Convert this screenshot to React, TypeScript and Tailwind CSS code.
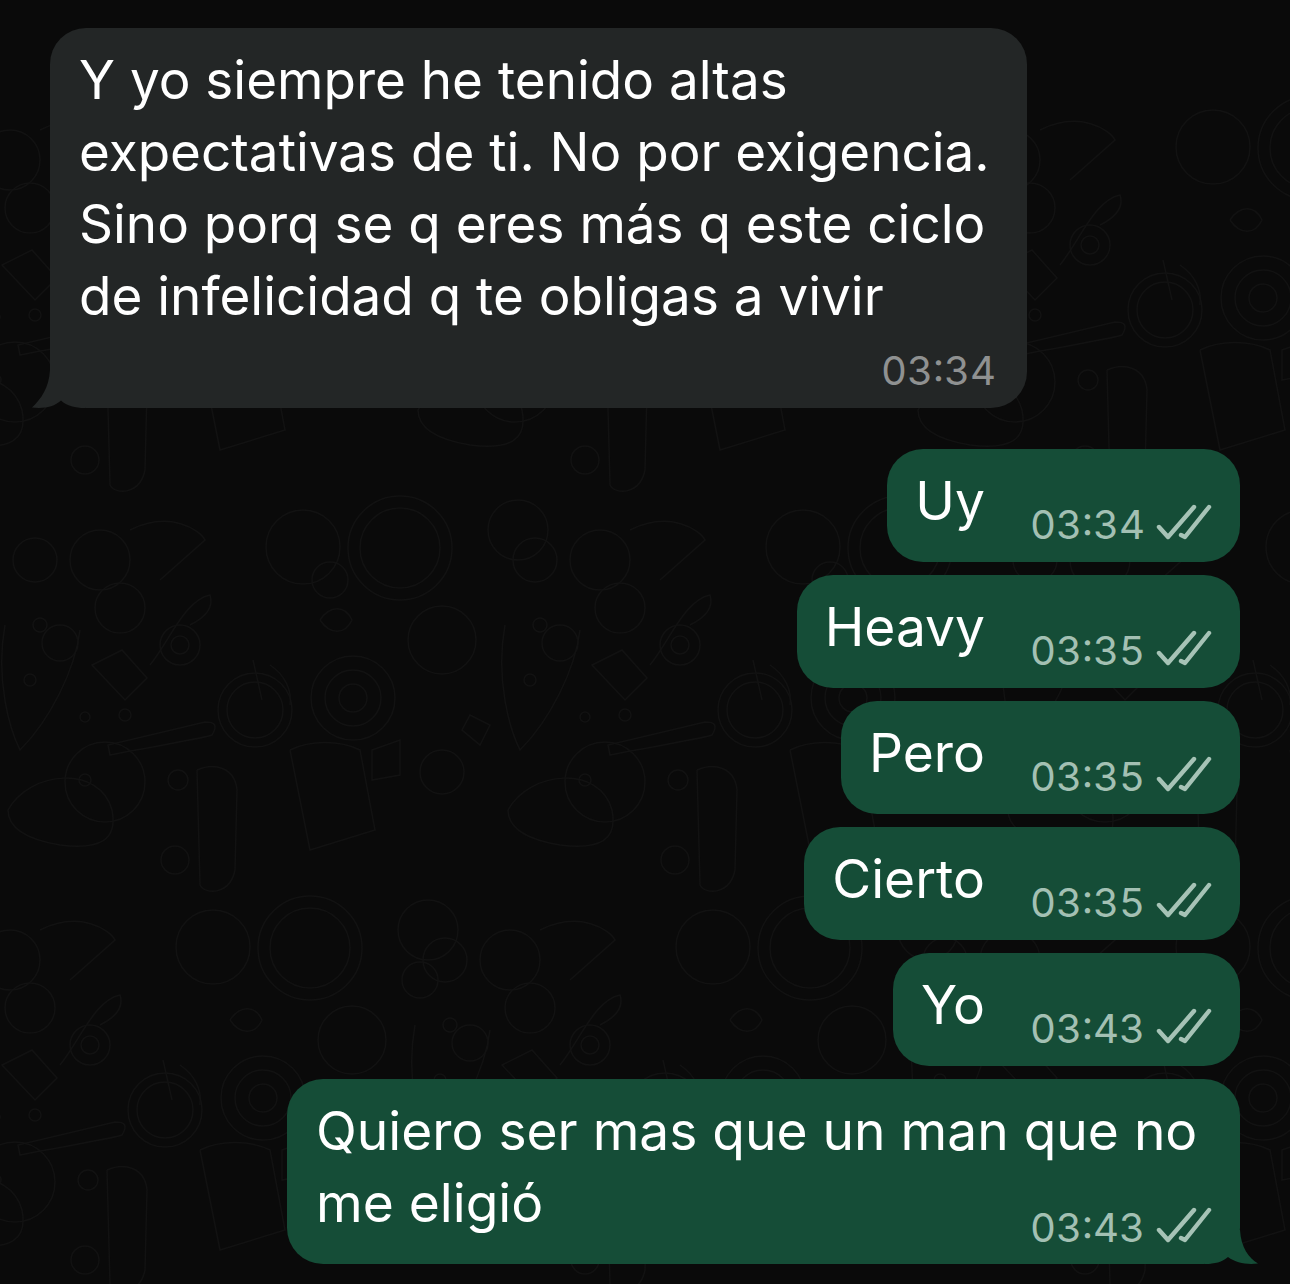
const font = { fontFamily: '"Inter", "Liberation Sans", sans-serif' };

const rings = [
  [303, 47, 37], [353, 198, 42], [353, 198, 28], [353, 198, 14], [35, 60, 22], [100, 60, 30], [120, 108, 25],
  [180, 145, 20], [180, 145, 9], [40, 125, 7], [60, 143, 18], [518, 30, 30], [400, 48, 52], [400, 48, 40],
  [255, 210, 37], [255, 210, 28], [105, 282, 40], [175, 360, 14], [178, 280, 10], [442, 272, 22], [420, 480, 18],
  [442, 140, 34], [125, 215, 6], [85, 217, 5], [30, 180, 6], [85, 280, 6],
];

const lines = [
  'M92 165 L125 200 L147 178 L122 150 Z',
  'M110 255 C160 245 205 238 212 235 C218 225 215 222 205 222 L108 245 Z',
  'M197 270 C215 262 235 268 237 290 L235 370 C230 395 205 395 200 385 L197 270',
  'M290 250 L310 350 L375 330 L360 250 C340 240 310 240 290 250',
  'M5 125 C-5 180 10 230 20 250 C50 220 75 170 80 130',
  'M8 310 C30 270 100 265 112 310 C118 340 100 350 60 345 C30 340 8 330 8 310',
  'M150 165 C170 140 185 100 210 95 C215 110 200 120 190 125',
  'M253 160 L262 200 M270 165 C285 175 292 190 290 205',
  'M462 230 L470 215 L490 225 L480 245 Z',
  'M372 250 L400 240 L400 275 L372 280 Z',
  'M320 120 C330 105 345 105 352 120 C345 135 330 135 320 120',
  'M130 30 C170 10 200 30 205 40 L160 80',
];

// faint wallpaper doodles, repeated across the chat
function Wallpaper() {
  return (
    <svg className="absolute inset-0" width="1290" height="1284" fill="none" stroke="#121212" strokeWidth="1.5">
      {[0, 1, 2, 3].flatMap((row) =>
        [0, 1, 2].map((col) => (
          <g key={`${row}-${col}`} transform={`translate(${col * 500 - ((row + 1) % 2) * 90} ${row * 400 + 100})`}>
            {rings.map(([cx, cy, r], i) => (
              <circle key={i} cx={cx} cy={cy} r={r} />
            ))}
            {lines.map((d, i) => (
              <path key={i} d={d} />
            ))}
          </g>
        )),
      )}
    </svg>
  );
}

function Checks() {
  return (
    <svg width="56" height="36" viewBox="0 0 56 36" fill="none" stroke="#a6c3b6" strokeWidth="4.4" strokeLinecap="round" strokeLinejoin="round" className="mb-[7px] ml-[11px] shrink-0">
      <path d="M3 23 L12 33 L38 3" />
      <path d="M25 31 L29 33 L53 3" />
    </svg>
  );
}

function Sent({ text, time }: { text: string; time: string }) {
  return (
    <div className="flex h-[113px] items-start rounded-[36px] bg-[#154d37] pl-[28px] pr-[28px] pt-[16px]">
      <span className="text-[53.3px] leading-[72px] text-white">{text}</span>
      <div className="ml-[45px] mt-[36px] flex items-center">
        <span className="text-[40.2px] leading-[48px] tabular-nums text-[#a3c0b3]">{time}</span>
        <Checks />
      </div>
    </div>
  );
}

export default function App() {
  return (
    <div className="relative h-[1284px] w-[1290px] overflow-hidden bg-[#0a0a0a]" style={font}>
      <Wallpaper />
      <div className="relative flex flex-col pl-[50px] pr-[50px] pt-[28px]">
        {/* Incoming */}
        <div className="relative h-[380px] w-[977px] rounded-[36px] bg-[#232626] pl-[29px] pt-[16px]">
          <p className="text-[53px] leading-[72px] text-white">
            Y yo siempre he tenido altas
            <br />
            expectativas de ti. No por exigencia.
            <br />
            Sino porq se q eres más q este ciclo
            <br />
            de infelicidad q te obligas a vivir
          </p>
          <div className="mr-[31px] mt-[15px] text-right text-[40.2px] leading-[48px] tabular-nums text-[#8f9191]">03:34</div>
          <svg width="60" height="40" viewBox="30 368 60 40" className="absolute bottom-0 left-[-20px] overflow-visible" fill="#232626">
            <path d="M50 370 C49 388 41 399 32 407.5 C43 409 54 407 61 400.5 C67 406 75 408 85 408 L85 370 Z" />
          </svg>
        </div>

        {/* Outgoing */}
        <div className="mt-[41px] flex flex-col items-end gap-[13px]">
          <Sent text="Uy" time="03:34" />
          <Sent text="Heavy" time="03:35" />
          <Sent text="Pero" time="03:35" />
          <Sent text="Cierto" time="03:35" />
          <Sent text="Yo" time="03:43" />
          <div className="relative h-[185px] w-[953px] rounded-[36px] bg-[#154d37] pl-[29px] pr-[28px] pt-[16px]">
            <p className="text-[53.3px] leading-[72px] text-white">
              Quiero ser mas que un man que no
              <br />
              me eligió
            </p>
            <div className="absolute bottom-[12px] right-[28px] flex items-center">
              <span className="text-[40.2px] leading-[48px] tabular-nums text-[#a3c0b3]">03:43</span>
              <Checks />
            </div>
            <svg width="60" height="40" viewBox="1200 1224 60 40" className="absolute bottom-0 right-[-20px] overflow-visible" fill="#154d37">
              <path d="M1240 1230 C1241 1248 1249 1258 1258 1263.5 C1247 1265 1236 1263 1228 1257 C1222 1262 1215 1264 1205 1264 L1205 1230 Z" />
            </svg>
          </div>
        </div>
      </div>
    </div>
  );
}
